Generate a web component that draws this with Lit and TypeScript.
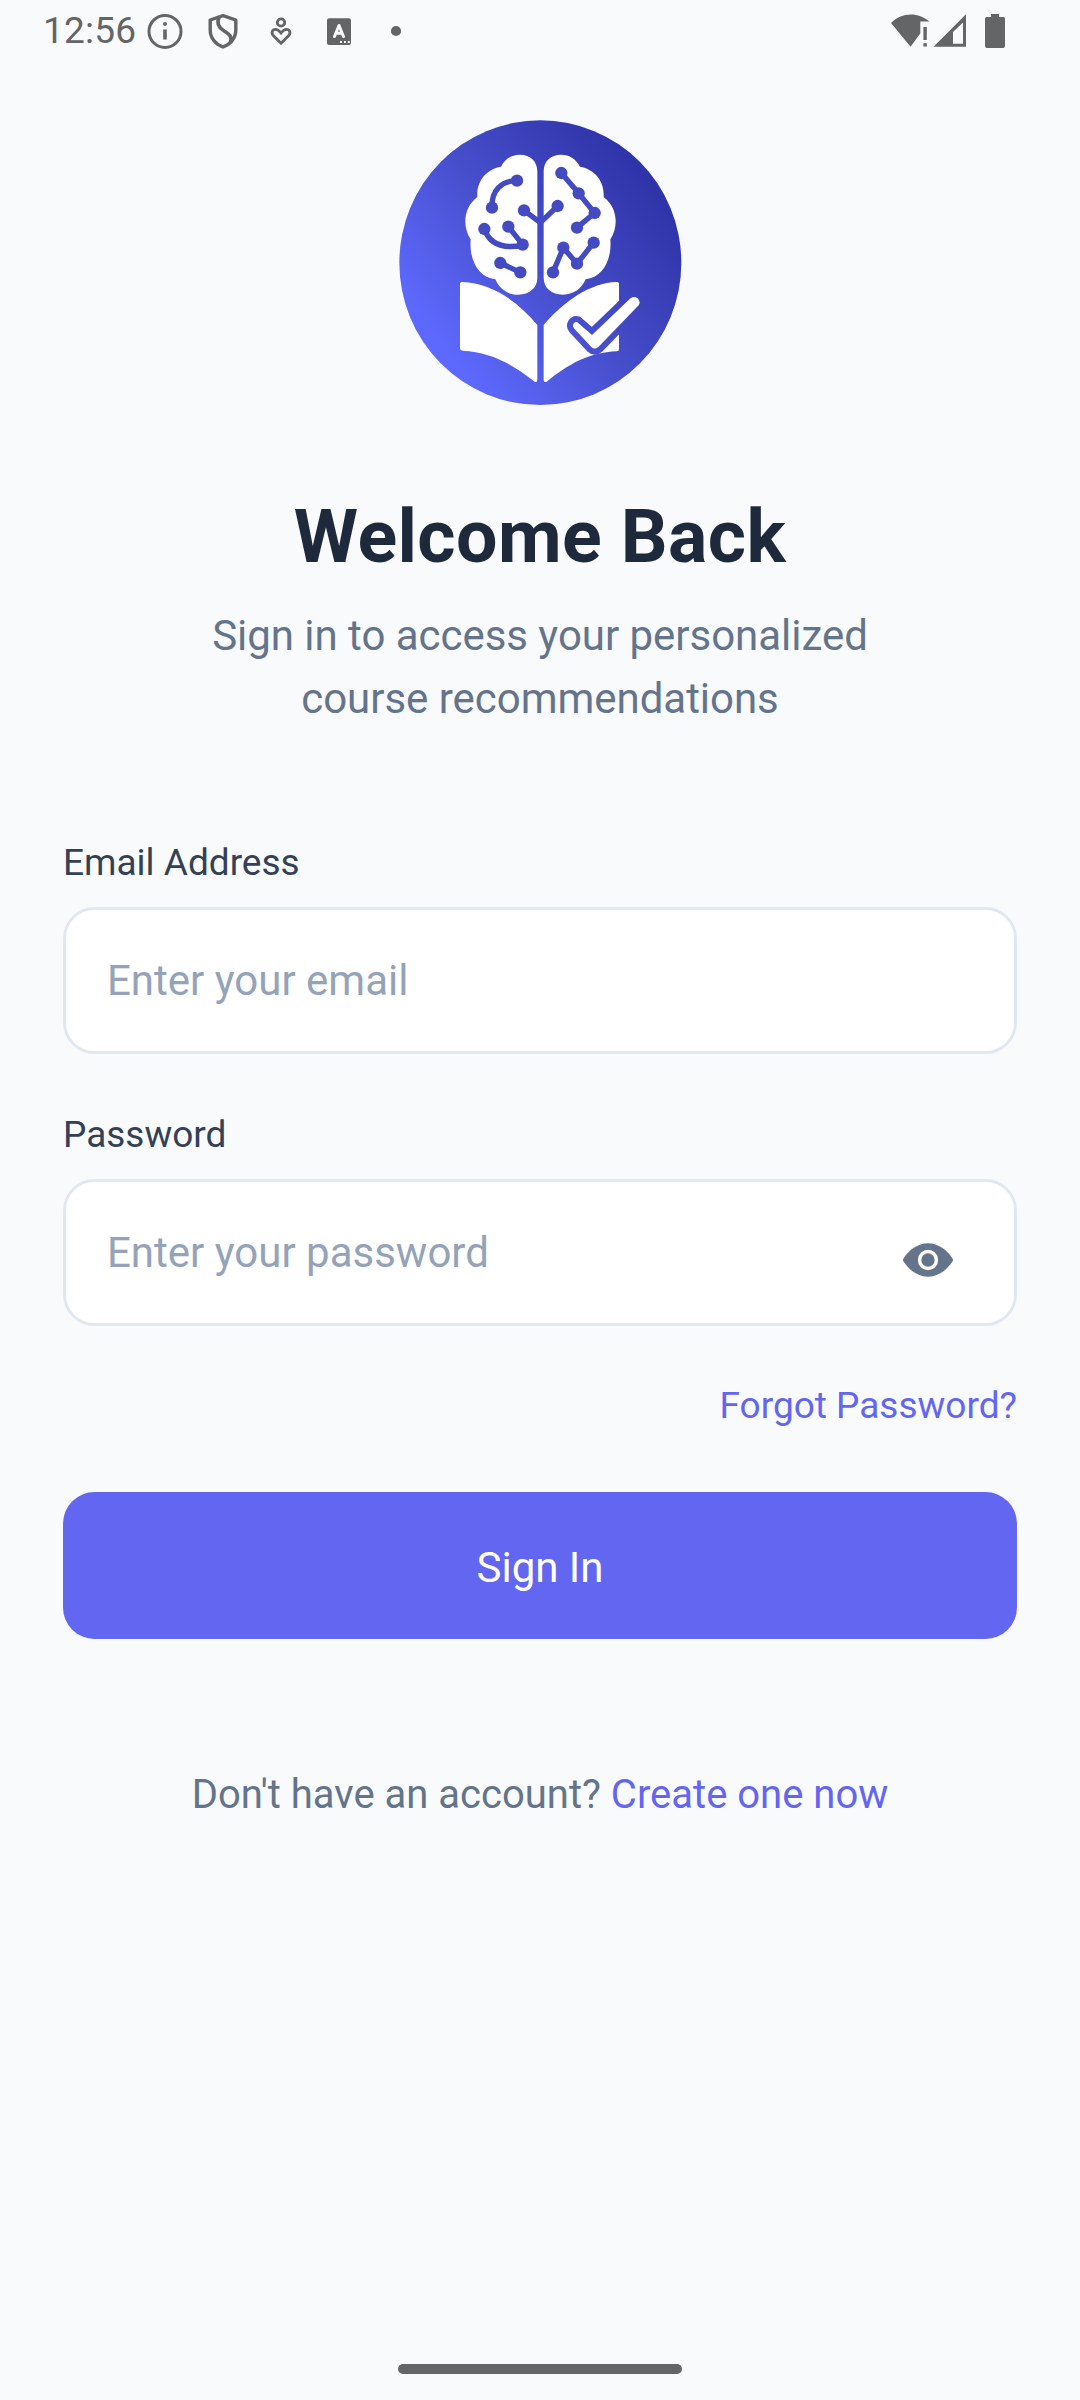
import { LitElement, html, css, svg } from "lit";
import { customElement, state } from "lit/decorators.js";

const nodes = [
  [381, 212], [306, 293], [402, 301], [503, 288], [283, 357], [355, 350], [398, 404],
  [331, 459], [391, 487], [514, 189], [566, 250], [614, 309], [561, 353],
  [489, 487], [520, 413], [561, 461], [611, 398],
];

const lobe =
  "M442 184C442 153 420 134 390 134C364 134 345 147 333 170C288 178 259 214 262 261C221 292 216 349 242 388C237 450 265 502 316 508C329 538 354 554 384 554C418 554 442 534 442 504Z";

@customElement("status-bar")
export class StatusBar extends LitElement {
  static styles = css`
    :host { display: flex; align-items: center; justify-content: space-between; height: 62px; padding: 0 72px 0 43px; color: #646567; box-sizing: border-box; }
    .left, .right { display: flex; align-items: center; }
    .clock { width: 104.2px; font-size: 37px; letter-spacing: 0.25px; line-height: 62px; white-space: nowrap; }
    .icons { display: flex; gap: 21.8px; }
    svg { display: block; fill: none; stroke: currentColor; }
    .fill { fill: currentColor; stroke: none; }
    .pale { fill: #f9fafc; stroke: none; }
    .letter { stroke: #f9fafc; stroke-width: 3; stroke-linejoin: round; stroke-linecap: round; }
  `;
  render() {
    return html`
      <div class="left">
        <span class="clock">12:56</span>
        <div class="icons">
          <svg width="36" height="36" viewBox="0 0 36 36" stroke-width="3">
            <circle cx="18" cy="18.4" r="16" />
            <path d="M18 16.5v10" stroke-width="3.6" /><circle class="fill" cx="18" cy="11" r="2" />
          </svg>
          <svg width="36" height="36" viewBox="0 0 36 36" stroke-width="3.4" stroke-linejoin="round">
            <path d="M18 2.6L30.800 7V17C30.800 25 25.500 31.500 18 34C10.500 31.500 5.200 25 5.200 17V7Z" />
            <path d="M14 4.500C11.500 10 13 14 18.500 17.500C25 21.500 27.500 24 25.500 30" stroke-width="3.600" />
          </svg>
          <svg width="36" height="36" viewBox="0 0 36 36" stroke-width="2.8" stroke-linejoin="miter">
            <circle cx="18" cy="9.500" r="3.700" />
            <path d="M18 30.300L10.500 22.800C7.500 19.500 9.700 16.300 12.500 16.300C15 16.300 16.500 18 18 20C19.500 18 21 16.300 23.500 16.300C26.300 16.300 28.500 19.500 25.500 22.800Z" />
          </svg>
          <svg width="36" height="36" viewBox="0 0 36 36">
            <rect class="fill" x="6" y="5.300" width="24" height="26.700" rx="2" />
            <path class="letter" d="M13.500 23.500L18 12.500L22.500 23.500M15 20.300H21" />
            <path class="pale" d="M19 28h2v2h-2zM23 28h2v2h-2zM26.800 28h2v2h-2z" />
          </svg>
          <svg width="36" height="36" viewBox="0 0 36 36"><circle class="fill" cx="18" cy="18" r="5.100" /></svg>
        </div>
      </div>
      <div class="right">
        <svg width="118" height="36" viewBox="0 0 118 36">
          <path class="fill" d="M1 10C12 -1 28 -1 39.300 8.500H30.300V20.500L20.500 33.700Z" />
          <path class="fill" d="M33.400 14h3.400v13h-3.400zM33.400 30.200h3.400v3.400h-3.400z" />
          <path class="fill" fill-rule="evenodd" d="M43.500 33.800L76 1.200V33.800ZM63 19V30.700H73V9.500Z" />
          <path class="fill" d="M101 1h8v3h4.500q1.500 0 1.500 1.500V33q0 2-2 2H97q-2 0-2-2V5.500q0-1.500 1.500-1.500H101z" />
        </svg>
      </div>`;
  }
}

@customElement("app-logo")
export class AppLogo extends LitElement {
  static styles = css`
    :host { display: block; width: 300px; height: 300px; }
    svg { display: block; }
    .white { fill: #fff; }
    .wire { fill: none; stroke: #444bc2; stroke-width: 16; stroke-linejoin: round; }
    .node { fill: #444bc2; }
  `;
  render() {
    return html`<svg width="300" height="300" viewBox="0 0 900 900">
      <defs>
        <linearGradient id="g" gradientUnits="userSpaceOnUse" x1="190" y1="750" x2="810" y2="260">
          <stop offset="0" stop-color="#5d69fd" /><stop offset=".5" stop-color="#464dca" /><stop offset="1" stop-color="#3034a9" />
        </linearGradient>
      </defs>
      <ellipse cx="451" cy="458" rx="423" ry="427" fill="url(#g)" />
      <path class="white" d=${lobe} />
      <path class="white" d=${lobe} transform="translate(903 0) scale(-1 1)" />
      <path class="wire" d="M306 293C304 240 335 212 381 212M402 301L451 338L503 288M283 357C298 400 335 418 398 406M355 350L398 404M331 459L391 487M514 189L566 250L614 309L561 353M489 487L520 413L561 461L611 398" />
      ${nodes.map(([x, y]) => svg`<circle class="node" cx=${x} cy=${y} r="18.5" />`)}
      <path class="white" d="M210 521Q210 515 217 516C302 518 383 573 442 645V810Q442 818 434 815C368 764 305 726 217 722Q210 721 210 715Z" />
      <path class="white" d="M461 645C520 576 600 518 680 516Q687 515 687 521V718Q687 724 680 724C597 727 535 763 470 815Q461 818 461 810Z" />
      <path class="white" stroke="url(#g)" stroke-width="36" stroke-linejoin="round" paint-order="stroke"
        d="M549 645Q552 634 562 637L606 675L720 566Q730 556 743 565Q753 575 746 586L625 711Q614 720 604 711L553 656Q548 650 549 645Z" />
    </svg>`;
  }
}

@customElement("app-root")
export class AppRoot extends LitElement {
  static styles = css`
    :host { display: flex; flex-direction: column; width: 1080px; height: 2400px; box-sizing: border-box; background: #f9fafc; font-family: Roboto, "Liberation Sans", sans-serif; overflow: hidden; }
    main { display: flex; flex-direction: column; flex: 1; padding: 48px 63px 0; }
    app-logo { margin-left: 327px; }
    h1 { margin: 84px 0 0; font-size: 73.5px; letter-spacing: 0.4px; line-height: 86px; font-weight: 700; color: #1e293b; text-align: center; }
    .sub { margin: 24px 0 0; font-size: 42px; letter-spacing: -0.03px; line-height: 63px; color: #64748b; text-align: center; }
    form { display: flex; flex-direction: column; margin-top: 110.600px; }
    .field { display: flex; flex-direction: column; gap: 23.400px; margin-bottom: 58.900px; }
    label { font-size: 37px; line-height: 43px; color: #334155; }
    .box { display: flex; align-items: center; height: 146.700px; box-sizing: border-box; border: 3px solid #e2e8f0; border-radius: 31.5px; background: #fff; padding: 0 60.500px 0 41px; }
    input { flex: 1; min-width: 0; border: 0; outline: 0; padding: 0; background: none; font: 42px Roboto, sans-serif; color: #1e293b; }
    input::placeholder { color: #94a3b8; opacity: 1; }
    .eye { display: block; margin-top: 16px; fill: #64748b; }
    .forgot { align-self: flex-end; margin-top: -1px; font-size: 37px; line-height: 43px; color: #6366f1; }
    button { margin-top: 65.400px; height: 147px; border: 0; border-radius: 31.5px; background: #6366f1; color: #fff; font: 42px Roboto, sans-serif; padding: 4px 0 0; }
    .signup { margin: 133.500px 0 0; font-size: 40px; line-height: 46px; text-align: center; color: #64748b; }
    .link { color: #6366f1; }
    footer { display: flex; justify-content: center; padding-bottom: 26px; }
    .handle { width: 284px; height: 10px; border-radius: 5px; background: #646567; }
  `;

  @state() private visible = false;

  render() {
    return html`
      <status-bar></status-bar>
      <main>
        <app-logo></app-logo>
        <h1>Welcome Back</h1>
        <p class="sub">Sign in to access your personalized<br />course recommendations</p>
        <form>
          <div class="field">
            <label for="email">Email Address</label>
            <div class="box"><input id="email" type="email" placeholder="Enter your email" /></div>
          </div>
          <div class="field">
            <label for="password">Password</label>
            <div class="box">
              <input id="password" type=${this.visible ? "text" : "password"} placeholder="Enter your password" />
              <svg class="eye" width="52" height="36" viewBox="0 0 156 108" @click=${() => (this.visible = !this.visible)}>
                <path fill-rule="evenodd" d="M4 50C20 25 47 4 78 4C109 4 136 25 152 50Q154 54 152 58C136 83 109 104 78 104C47 104 20 83 4 58Q2 54 4 50ZM78 23.500A30.500 30.500 0 1 0 78 84.500A30.500 30.500 0 1 0 78 23.500Z" />
                <circle cx="78" cy="54" r="20" />
              </svg>
            </div>
          </div>
          <span class="forgot">Forgot Password?</span>
          <button type="button">Sign In</button>
        </form>
        <p class="signup">Don't have an account? <span class="link">Create one now</span></p>
      </main>
      <footer><div class="handle"></div></footer>`;
  }
}
